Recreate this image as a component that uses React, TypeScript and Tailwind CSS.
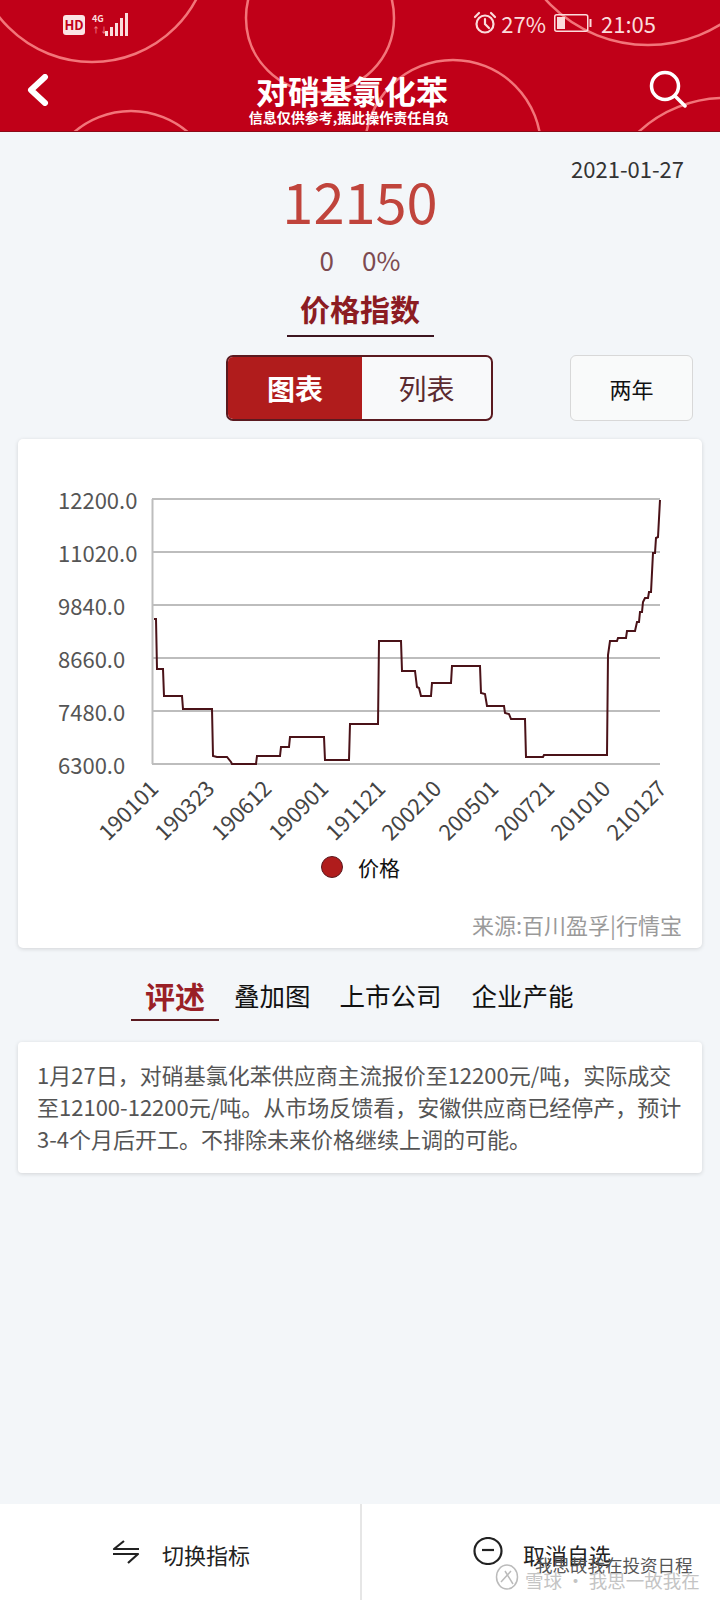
const gridLines = [499, 552, 605, 658, 711, 764];
const yLabels = ['12200.0', '11020.0', '9840.0', '8660.0', '7480.0', '6300.0'];

const xLabels = [
  { text: '190101', x: 160 },
  { text: '190323', x: 216 },
  { text: '190612', x: 273 },
  { text: '190901', x: 330 },
  { text: '191121', x: 387 },
  { text: '200210', x: 443 },
  { text: '200501', x: 500 },
  { text: '200721', x: 556 },
  { text: '201010', x: 612 },
  { text: '210127', x: 668 },
];

const pricePath =
  'M154 619 L156 619 L157 669 L163 669 L164 696 L182 696 L183 709 L212 709 L213 756 L217 757 L227 757 L231 762 L232 764 ' +
  'L256 764 L257 756 L280 756 L281 747 L289 747 L290 737 L324 737 L325 760 L349 760 L350 724 L378 724 L379 641 L401 641 ' +
  'L402 671 L415 671 L417 687 L419 688 L421 696 L431 696 L432 683 L451 683 L452 666 L480 666 L481 693 L485 694 L487 706 ' +
  'L504 706 L505 713 L509 714 L511 719 L525 719 L526 757 L543 757 L544 755 L607 755 L608 655 L610 641 L617 641 L618 638 ' +
  'L626 638 L627 631 L635 631 L637 622 L639 622 L640 612 L642 612 L643 602 L645 598 L648 598 L649 592 L651 592 L653 553 ' +
  'L655 553 L656 538 L658 537 L660 500';

const headerCircles = [
  { cx: 92, cy: -56, r: 118 },
  { cx: 320, cy: 18, r: 74 },
  { cx: 648, cy: -93, r: 138 },
  { cx: 453, cy: 148, r: 88 },
  { cx: 131, cy: 198, r: 87 },
  { cx: 725, cy: 225, r: 127 },
];

const App = () => {
  return (
    <div className="flex h-[1600px] w-[720px] flex-col overflow-hidden bg-[#f3f6f9] font-['Noto_Sans_CJK_SC','Liberation_Sans',sans-serif]">
      {/* Header */}
      <header className="relative h-[132px] shrink-0 overflow-hidden border-b border-[#8c0a18] bg-[#c00018] text-white">
        <svg className="absolute inset-0" width="720" height="132" fill="none" stroke="#f2757a" strokeWidth="2.5">
          {headerCircles.map((c) => (
            <circle key={c.cx} cx={c.cx} cy={c.cy} r={c.r} />
          ))}
        </svg>

        {/* Status bar */}
        <div className="relative flex h-[48px] items-center justify-between pl-[63px] pr-[64px] pt-[1px] text-[#fbdcdc]">
          <div className="flex items-center">
            <span className="flex h-[20px] w-[22px] items-center justify-center rounded-[3px] bg-[#fbe4e4] text-[13px] font-bold leading-none text-[#c00018]">
              HD
            </span>
            <div className="ml-[7px] flex h-[22px] w-[13px] flex-col text-[9px] font-bold leading-[10px]">
              <span>4G</span>
              <span className="mt-[1px] text-[8px] text-[#ee7a80]">↑↓</span>
            </div>
            <svg width="23" height="23" viewBox="0 0 23 23" fill="#fbdcdc">
              <rect x="0" y="18" width="3" height="5" />
              <rect x="5" y="14" width="3" height="9" />
              <rect x="10" y="10" width="3" height="13" />
              <rect x="15" y="5" width="3" height="18" />
              <rect x="20" y="0" width="3" height="23" />
            </svg>
          </div>
          <div className="mb-[3px] flex items-center">
            <svg width="24" height="24" viewBox="0 0 24 24" fill="none" stroke="#fbdcdc" strokeWidth="2.2" strokeLinecap="round">
              <circle cx="12" cy="13" r="8.5" />
              <path d="M12 8 V13 L16 17" />
              <path d="M2 6 L6 2 M22 6 L18 2" />
            </svg>
            <span className="ml-[4px] text-[22px] leading-[28px]">27%</span>
            <svg className="ml-[8px]" width="38" height="18" viewBox="0 0 38 18" fill="none">
              <rect x="0.75" y="0.75" width="33" height="16.5" rx="2" stroke="#fbdcdc" strokeWidth="1.5" />
              <rect x="3" y="3" width="8" height="12" fill="#fbdcdc" />
              <rect x="35.5" y="5" width="2" height="8" fill="#fbdcdc" />
            </svg>
            <span className="ml-[9px] text-[22px] leading-[28px]">21:05</span>
          </div>
        </div>

        {/* Nav row */}
        <div className="relative flex h-[83px] items-start justify-between pl-[27px] pr-[33px]">
          <svg className="mt-[26px]" width="22" height="32" viewBox="0 0 22 32" fill="none" stroke="white" strokeWidth="6" strokeLinecap="round" strokeLinejoin="round">
            <path d="M18 3 L4 16 L18 29" />
          </svg>
          <div className="flex flex-col items-center pt-[23px]">
            <h1 className="pl-[6px] text-[32px] font-bold leading-[38px]">对硝基氯化苯</h1>
            <p className="mt-[-1px] text-[14px] font-bold leading-[18px]">信息仅供参考,据此操作责任自负</p>
          </div>
          <svg className="mt-[22px]" width="38" height="38" viewBox="0 0 38 38" fill="none" stroke="white" strokeWidth="3.5" strokeLinecap="round">
            <circle cx="16" cy="16" r="13.5" />
            <path d="M26 26 L36 36" />
          </svg>
        </div>
      </header>

      <main className="flex flex-1 flex-col px-[18px]">
        {/* Price summary */}
        <div className="pt-[24px] text-right">
          <span className="mr-[18px] text-[22px] leading-[24px] text-[#333]">2021-01-27</span>
        </div>
        <div className="flex flex-col items-center">
          <div className="mt-[-11px] text-[56px] leading-[56px] text-[#c0443c]">12150</div>
          <div className="mt-[15px] flex gap-[28px] text-[26px] leading-[34px] text-[#7d4a50]">
            <span>0</span>
            <span>0%</span>
          </div>
          <div className="mt-[10px] flex h-[50px] w-[147px] items-center justify-center border-b-2 border-[#3c1520] pb-[6px] text-[30px] font-bold leading-none text-[#8c1c22]">
            价格指数
          </div>
        </div>

        {/* Chart / list switch */}
        <div className="mt-[18px] flex pl-[208px]">
          <div className="flex h-[66px] w-[267px] overflow-hidden rounded-[7px] border-2 border-[#5a1a20] bg-[#f8f9fa]">
            <div className="flex w-[134px] items-center justify-center bg-[#b01c1c] text-[28px] font-bold text-white">图表</div>
            <div className="flex flex-1 items-center justify-center text-[28px] text-[#5a2a30]">列表</div>
          </div>
          <div className="ml-[77px] flex h-[66px] w-[123px] items-center justify-center rounded-[6px] border border-[#d8d8d8] bg-[#f9fafa] text-[22px] text-[#111]">
            两年
          </div>
        </div>

        {/* Chart card */}
        <section className="mt-[18px] flex h-[509px] flex-col rounded-[5px] bg-white shadow-[0_1px_4px_rgba(0,0,0,0.14)]">
          <svg width="684" height="410" viewBox="18 439 684 410" className="shrink-0">
            <defs>
              <clipPath id="x-clip">
                <rect x="18" y="770" width="646" height="78" />
              </clipPath>
            </defs>
            <line x1="152.5" y1="499" x2="152.5" y2="764" stroke="#bdbdbd" strokeWidth="2" />
            {gridLines.map((y) => (
              <line key={y} x1="152" y1={y} x2="660" y2={y} stroke="#bdbdbd" strokeWidth="2" />
            ))}
            {yLabels.map((label, i) => (
              <text key={label} x="58" y={gridLines[i] + 10} fontSize="22" fill="#555">
                {label}
              </text>
            ))}
            <path d={pricePath} fill="none" stroke="#4a1218" strokeWidth="2" />
            <g clipPath="url(#x-clip)">
              {xLabels.map((l) => (
                <text
                  key={l.text}
                  x={l.x}
                  y="790"
                  fontSize="22"
                  fill="#444"
                  textAnchor="end"
                  transform={`rotate(-45 ${l.x} 790)`}
                >
                  {l.text}
                </text>
              ))}
            </g>
          </svg>
          <div className="flex h-[36px] items-center pl-[303px]">
            <span className="h-[22px] w-[22px] rounded-full border border-[#5a1a20] bg-[#b01c1c]" />
            <span className="ml-[15px] text-[21px] leading-none text-[#111]">价格</span>
          </div>
          <div className="mt-[25px] pr-[20px] text-right text-[22px] leading-[28px] text-[#9a9a9a]">来源:百川盈孚|行情宝</div>
        </section>

        {/* Tabs */}
        <nav className="mt-[31px] flex h-[42px] items-start pl-[113px] text-[25.5px] leading-[32px] text-[#111]">
          <div className="flex h-[42px] w-[88px] justify-center border-b-2 border-[#5a1a20] text-[30px] font-bold text-[#9a2026]">评述</div>
          <span className="ml-[15px]">叠加图</span>
          <span className="ml-[29px]">上市公司</span>
          <span className="ml-[30px]">企业产能</span>
        </nav>

        {/* Commentary */}
        <section className="mt-[21px] h-[131px] rounded-[4px] bg-white px-[19px] pt-[16px] text-[22px] leading-[32px] text-[#555] shadow-[0_1px_4px_rgba(0,0,0,0.14)]">
          1月27日，对硝基氯化苯供应商主流报价至12200元/吨，实际成交至12100-12200元/吨。从市场反馈看，安徽供应商已经停产，预计3-4个月后开工。不排除未来价格继续上调的可能。
        </section>
      </main>

      {/* Bottom actions */}
      <footer className="relative flex h-[96px] shrink-0 bg-white">
        <button className="flex w-[360px] items-start justify-start pl-[112px] pt-[36px]">
          <svg width="28" height="24" viewBox="0 0 28 24" fill="none" stroke="#222" strokeWidth="2.2" strokeLinejoin="round">
            <path d="M12 1 L2 9 H27" />
            <path d="M1 14 H26 L16 23" />
          </svg>
          <span className="ml-[22px] text-[22px] leading-[28px] text-[#222]">切换指标</span>
        </button>
        <div className="w-[2px] bg-[#e6e6e6]" />
        <button className="flex flex-1 items-start pl-[111px] pt-[33px]">
          <svg width="30" height="28" viewBox="0 0 30 28" fill="none" stroke="#222" strokeWidth="2.2">
            <ellipse cx="15" cy="14" rx="13.5" ry="13" />
            <path d="M9 13 H21" />
          </svg>
          <span className="ml-[20px] mt-[3px] text-[22px] leading-[28px] text-[#222]">取消自选</span>
        </button>

        {/* Watermark */}
        <div className="absolute left-[495px] top-[58px] flex items-start">
          <svg width="24" height="28" viewBox="0 0 24 28" fill="none" stroke="#bbb" strokeWidth="1.5">
            <ellipse cx="12" cy="15" rx="10.5" ry="12" />
            <path d="M6 20 L16 9 M10 9 L18 22" />
          </svg>
          <div className="ml-[6px] mt-[-7px] whitespace-nowrap">
            <div className="pl-[10px] text-[17.5px] leading-[20px] text-[#555]">我思故我在投资日程</div>
            <div className="mt-[-5px] text-[18.5px] leading-[20px] text-[#c4c4c4]">雪球 · 我思一故我在</div>
          </div>
        </div>
      </footer>
    </div>
  );
};

export default App;
